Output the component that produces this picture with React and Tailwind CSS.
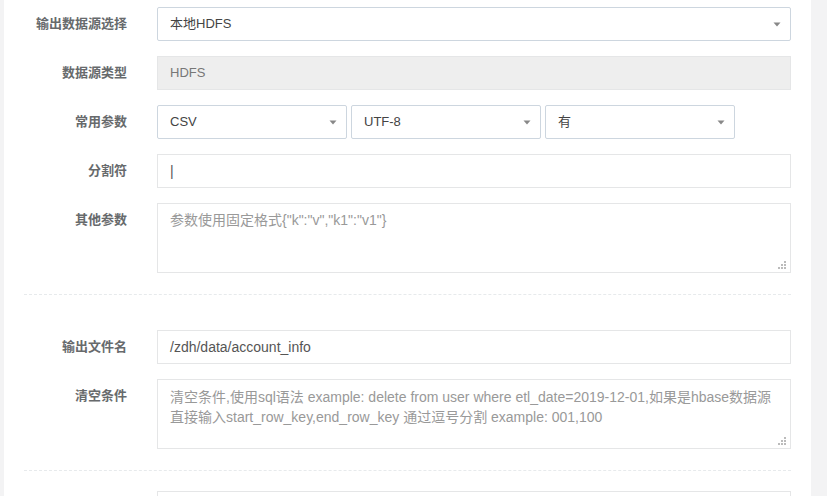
const font = { fontFamily: '"Liberation Sans", "Noto Sans CJK SC", sans-serif' }

function Caret() {
  return (
    <svg width="8" height="5" viewBox="0 0 8 5" className="shrink-0">
      <path d="M0.5 0.5 L7.5 0.5 L4 4.5 Z" fill="#888" />
    </svg>
  )
}

function Grip() {
  return (
    <svg width="8" height="8" viewBox="0 0 8 8" className="absolute right-[4px] bottom-[3px]">
      <rect x="6" y="0" width="2" height="2" fill="#bbb" />
      <rect x="3" y="3" width="2" height="2" fill="#bbb" />
      <rect x="6" y="3" width="2" height="2" fill="#bbb" />
      <rect x="0" y="6" width="2" height="2" fill="#bbb" />
      <rect x="3" y="6" width="2" height="2" fill="#bbb" />
      <rect x="6" y="6" width="2" height="2" fill="#bbb" />
    </svg>
  )
}

function Row({ label, children, className = '' }) {
  return (
    <div className={`flex ${className}`}>
      <label className="w-[123px] shrink-0 text-right font-bold text-[13px] leading-[20px] pt-[7px] text-[#676a6c]">
        {label}
      </label>
      <div className="ml-[30px] w-[634px]">{children}</div>
    </div>
  )
}

function Select({ value, className = '' }) {
  return (
    <div className={`h-[34px] flex items-center justify-between pl-[12px] pr-[9px] border border-[#cdd6df] rounded-[2px] bg-white text-[13px] text-[#444] ${className}`}>
      <span>{value}</span>
      <Caret />
    </div>
  )
}

function Input({ value, disabled, size = 'text-[14px]' }) {
  return (
    <div className={`h-[34px] flex items-center px-[12px] border border-[#e5e6e7] ${size} ${disabled ? 'bg-[#eee] text-[#777]' : 'bg-white text-[#555]'}`}>
      {value}
    </div>
  )
}

function TextArea({ lines, top = 'pt-[6px]' }) {
  return (
    <div className={`relative h-[70px] border border-[#e5e6e7] bg-white px-[12px] ${top} text-[14px] leading-[20px] text-[#999]`}>
      {lines.map((l) => (
        <div key={l} className="whitespace-nowrap">{l}</div>
      ))}
      <Grip />
    </div>
  )
}

export default function App() {
  return (
    <div className="flex w-[827px] h-[496px] overflow-hidden bg-[#f3f3f4]" style={font}>
      <div className="w-[4px] shrink-0" />
      <div className="w-[807px] shrink-0 bg-white pt-[7px]">
        <Row label="输出数据源选择">
          <Select value="本地HDFS" />
        </Row>
        <Row label="数据源类型" className="mt-[15px]">
          <Input value="HDFS" disabled size="text-[13px]" />
        </Row>
        <Row label="常用参数" className="mt-[15px]">
          <div className="flex gap-[4px]">
            <Select value="CSV" className="w-[190px]" />
            <Select value="UTF-8" className="w-[190px]" />
            <Select value="有" className="w-[190px]" />
          </div>
        </Row>
        <Row label="分割符" className="mt-[15px]">
          <Input value="|" />
        </Row>
        <Row label="其他参数" className="mt-[15px]">
          <TextArea lines={['参数使用固定格式{"k":"v","k1":"v1"}']} />
        </Row>
        <div className="ml-[20px] w-[767px] mt-[21px] border-t border-dashed border-[#e7eaec]" />
        <Row label="输出文件名" className="mt-[35px]">
          <Input value="/zdh/data/account_info" />
        </Row>
        <Row label="清空条件" className="mt-[15px]">
          <TextArea
            top="pt-[7px]"
            lines={[
              '清空条件,使用sql语法 example: delete from user where etl_date=2019-12-01,如果是hbase数据源',
              '直接输入start_row_key,end_row_key 通过逗号分割 example: 001,100',
            ]}
          />
        </Row>
        <div className="ml-[20px] w-[767px] mt-[21px] border-t border-dashed border-[#e7eaec]" />
        <Row label="" className="mt-[20px]">
          <div className="h-[34px] border border-[#e5e6e7] bg-white" />
        </Row>
      </div>
    </div>
  )
}
